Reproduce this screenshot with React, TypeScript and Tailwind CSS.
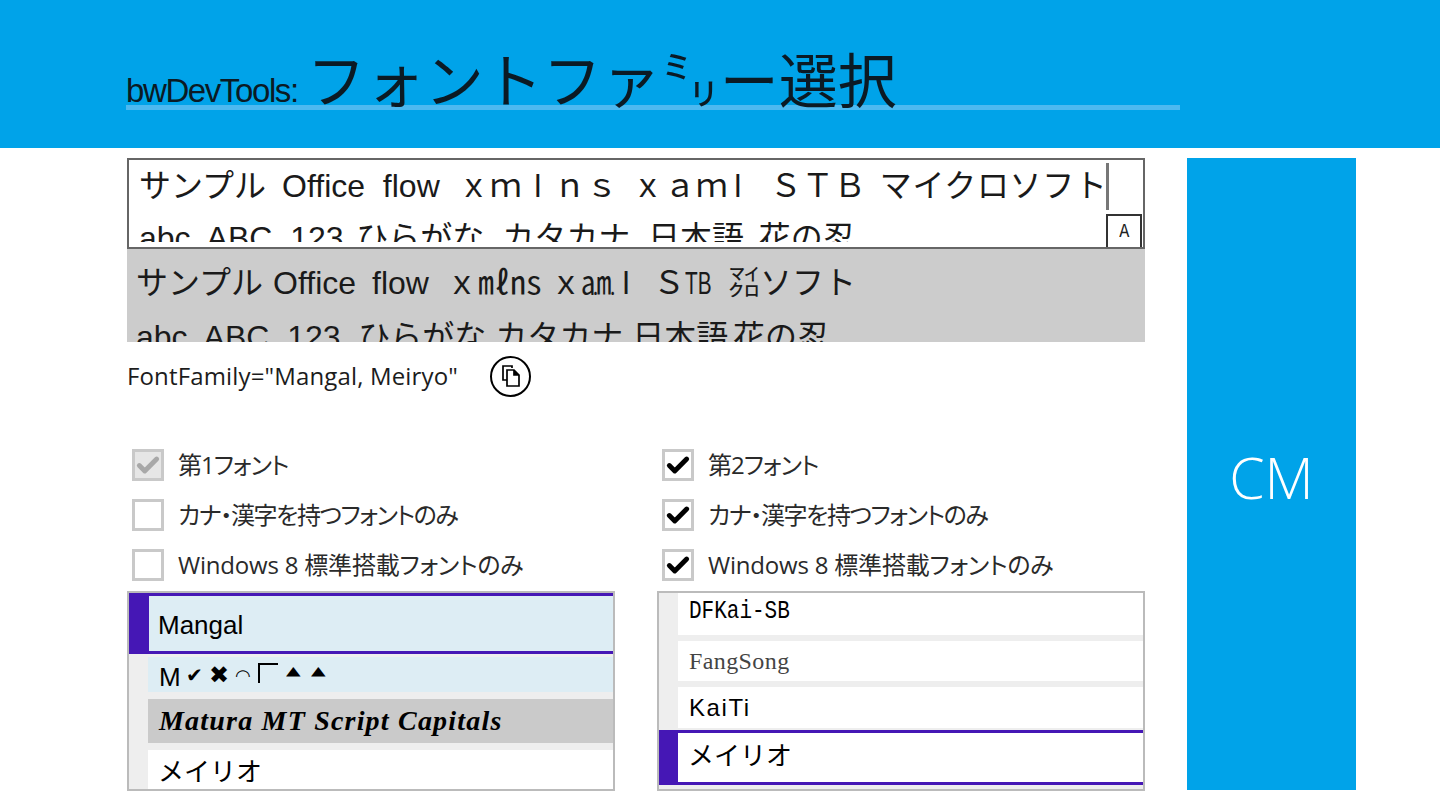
import { Check } from "lucide-react";

const ui = "font-['Open_Sans','Noto_Sans_CJK_JP',sans-serif]";
const sans = "font-['Liberation_Sans','Noto_Sans_CJK_JP',sans-serif]";

function CheckRow({ label, checked, disabled, fit }: { label: string; checked?: boolean; disabled?: boolean; fit: string }) {
  return (
    <div className="flex h-[50px] items-center">
      <div
        className={`ml-[5px] flex h-[32px] w-[32px] items-center justify-center border-[3px] border-[#c9c9c9] ${
          disabled ? "bg-[#e6e6e6]" : "bg-white"
        }`}
      >
        {checked && <Check size={27} strokeWidth={4.5} className={disabled ? "text-[#a8a8a8]" : "text-black"} />}
      </div>
      <span className={`ml-[14px] whitespace-nowrap text-[24px] leading-none text-[#2a2a2a] [font-feature-settings:'palt'] ${fit}`}>
        {label}
      </span>
    </div>
  );
}

// the full-width l is drawn straight in the original font
function WideL({ pull = "" }: { pull?: string }) {
  return <span className={`inline-block w-[32px] text-center ${pull}`}>l</span>;
}

function SampleLines({ gray }: { gray?: boolean }) {
  if (gray) {
    return (
      <div className={`${sans} whitespace-pre text-[32px] leading-[52px] text-[#1a1a1a]`}>
        <div>
          サンプル<span className="ml-[10px]">Office</span>
          <span className="ml-[16px]">flow</span>
          <span className="ml-[17px]">ｘ㎖㎱</span>
          <span className="ml-[8px]">ｘ㏂</span>
          <WideL pull="-ml-[4px]" />
          <span className="ml-[11px]">Ｓ</span>
          <span className="inline-block w-[26px] origin-left scale-x-[0.65]">TB</span>
          <span className="ml-[17px]">㍃ソフト</span>
        </div>
        <div className="mt-[2px]">
          abc  ABC  123  ひらがな カタカナ 日本語<span className="-ml-[4px]"> 花の忍</span>
        </div>
      </div>
    );
  }
  return (
    <div className={`${sans} whitespace-pre text-[32px] leading-[52px] text-[#1a1a1a]`}>
      <div>
        サンプル<span className="ml-[16px]">Office  flow</span>
        <span className="ml-[18px]">ｘｍ</span>
        <WideL />
        ｎｓ
        <span className="ml-[14px]">ｘａｍ</span>
        <WideL pull="-ml-[6px]" />
        <span className="ml-[16px]">ＳＴＢ</span>
        <span className="ml-[14px] tracking-[0.6px]">マイクロソフト</span>
      </div>
      <div>
        abc  ABC  123<span className="-ml-[5px]">  ひらがな  カタカナ  日本語</span>
        <span className="-ml-[3px]">  花の忍</span>
      </div>
    </div>
  );
}

export default function App() {
  return (
    <div className={`${ui} h-[810px] w-[1440px] overflow-hidden bg-white`}>
      <header className="h-[148px] bg-[#00a3e9] pl-[126px]">
        <div className={`${sans} flex h-[110px] w-[1054px] items-end border-b-[5px] border-[#4db9f0] leading-none text-[#0b1a24]`}>
          <span className="mb-[-2px] text-[33px] tracking-[-1.4px]">bwDevTools:</span>
          <span className="mb-[-8px] ml-[9px] text-[59px]">フォントファ㍉ー選択</span>
        </div>
      </header>

      <main className="flex gap-[42px] pl-[127px] pt-[10px]">
        <div className="w-[1018px]">
          <div className="relative h-[91px] border-2 border-[#666] pl-[10px]">
            <div className="h-[82px] overflow-hidden">
              <SampleLines />
            </div>
            <div className="absolute left-[977px] top-[3px] h-[47px] w-[3px] bg-[#777]" />
            <div className="absolute bottom-0 right-[1px] flex h-[33px] w-[36px] items-center justify-center border-x-2 border-t-2 border-[#333] bg-white font-['Liberation_Mono',monospace] text-[21px] text-[#222]">
              <span className="inline-block scale-x-[0.8]">A</span>
            </div>
          </div>
          <div className="h-[93px] overflow-hidden bg-[#cccccc] pl-[9px] pt-[8px]">
            <SampleLines gray />
          </div>

          <div className="mt-[14px] flex h-[40px] items-center">
            <span className="w-[363px] whitespace-nowrap text-[24px] leading-none tracking-[0.15px] text-[#1c1c1c]">
              FontFamily="Mangal, Meiryo"
            </span>
            <div className="flex h-[41px] w-[41px] items-center justify-center rounded-full border-2 border-black">
              <svg width="22" height="24" viewBox="0 0 22 24" fill="none" stroke="black" strokeWidth="1.7">
                <path d="M12 4 V2 H3 V16 H7" />
                <path d="M7 6 H14 L19 11 V22 H7 Z" fill="white" />
                <path d="M14 6 V11 H19" fill="black" />
              </svg>
            </div>
          </div>

          <div className="mt-[44px] grid grid-cols-[530px_488px]">
            <div>
              <CheckRow label="第1フォント" checked disabled fit="tracking-[-1px]" />
              <CheckRow label="カナ・漢字を持つフォントのみ" fit="tracking-[-1.4px]" />
              <CheckRow label="Windows 8 標準搭載フォントのみ" fit="tracking-[-0.2px]" />
              <div className={`${sans} mt-[1px] h-[200px] w-[488px] overflow-hidden border-2 border-[#bbbbbb] bg-[#eeeeee] text-[26px] text-black`}>
                <div className="flex h-[61px] items-center border-y-[3px] border-[#4517b5] bg-[#ddedf4] pl-[20px]">
                  <div className="-ml-[20px] mr-[9px] h-[61px] w-[20px] shrink-0 bg-[#4517b5]" />
                  <span className="pt-[3px]">Mangal</span>
                </div>
                <div className="mt-[3px] ml-[19px] flex h-[35px] items-center bg-[#ddedf4] pl-[11px] font-['DejaVu_Sans',sans-serif] leading-none">
                  <span className={`${sans} mt-[4px] w-[27px] text-[26px]`}>M</span>
                  <span className="w-[23px] text-[20px]">✔</span>
                  <span className="w-[26px] text-[24px]">✖</span>
                  <span className="mt-[2px] w-[23px] text-[18px]">◠</span>
                  <span className="-mt-[4px] mr-[8px] h-[20px] w-[20px] border-l-2 border-t-2 border-black" />
                  <span className="-mt-[8px] inline-block w-[25px] scale-y-[0.65] text-[19px]">▲</span>
                  <span className="-mt-[8px] inline-block w-[25px] scale-y-[0.65] text-[19px]">▲</span>
                </div>
                <div className="mt-[7px] ml-[19px] flex h-[44px] items-center bg-[#cacaca] pl-[11px] font-['Liberation_Serif',serif] text-[28px] font-bold italic tracking-[1.2px]">
                  Matura MT Script Capitals
                </div>
                <div className="mt-[7px] ml-[19px] flex h-[44px] items-center bg-white pl-[10px]">メイリオ</div>
              </div>
            </div>
            <div>
              <CheckRow label="第2フォント" checked fit="tracking-[-1px]" />
              <CheckRow label="カナ・漢字を持つフォントのみ" checked fit="tracking-[-1.4px]" />
              <CheckRow label="Windows 8 標準搭載フォントのみ" checked fit="tracking-[-0.2px]" />
              <div className={`${sans} mt-[1px] h-[200px] w-[488px] overflow-hidden border-2 border-[#bbbbbb] bg-[#eeeeee] text-[26px] text-black`}>
                <div className="ml-[19px] flex h-[42px] items-center bg-white pb-[4px] pl-[11px] font-['Liberation_Mono',monospace] text-[25px]">
                  <span className="inline-block origin-left scale-x-[0.84]">DFKai-SB</span>
                </div>
                <div className="mt-[6px] ml-[19px] flex h-[40px] items-center bg-white pl-[11px] font-['Liberation_Serif',serif] text-[24px] tracking-[0.4px] text-[#444]">
                  FangSong
                </div>
                <div className="mt-[6px] ml-[19px] flex h-[41px] items-center bg-white pl-[11px] text-[24px] tracking-[1.6px]">
                  KaiTi
                </div>
                <div className="mt-[2px] flex h-[55px] border-y-[3px] border-[#4517b5] bg-white">
                  <div className="w-[19px] shrink-0 bg-[#4517b5]" />
                  <div className="flex items-center pb-[2px] pl-[10px]">メイリオ</div>
                </div>
              </div>
            </div>
          </div>
        </div>

        <aside className="flex h-[632px] w-[169px] items-center justify-center bg-[#00a3e9] pt-[7px] text-[57px] font-light text-white">
          CM
        </aside>
      </main>
    </div>
  );
}
